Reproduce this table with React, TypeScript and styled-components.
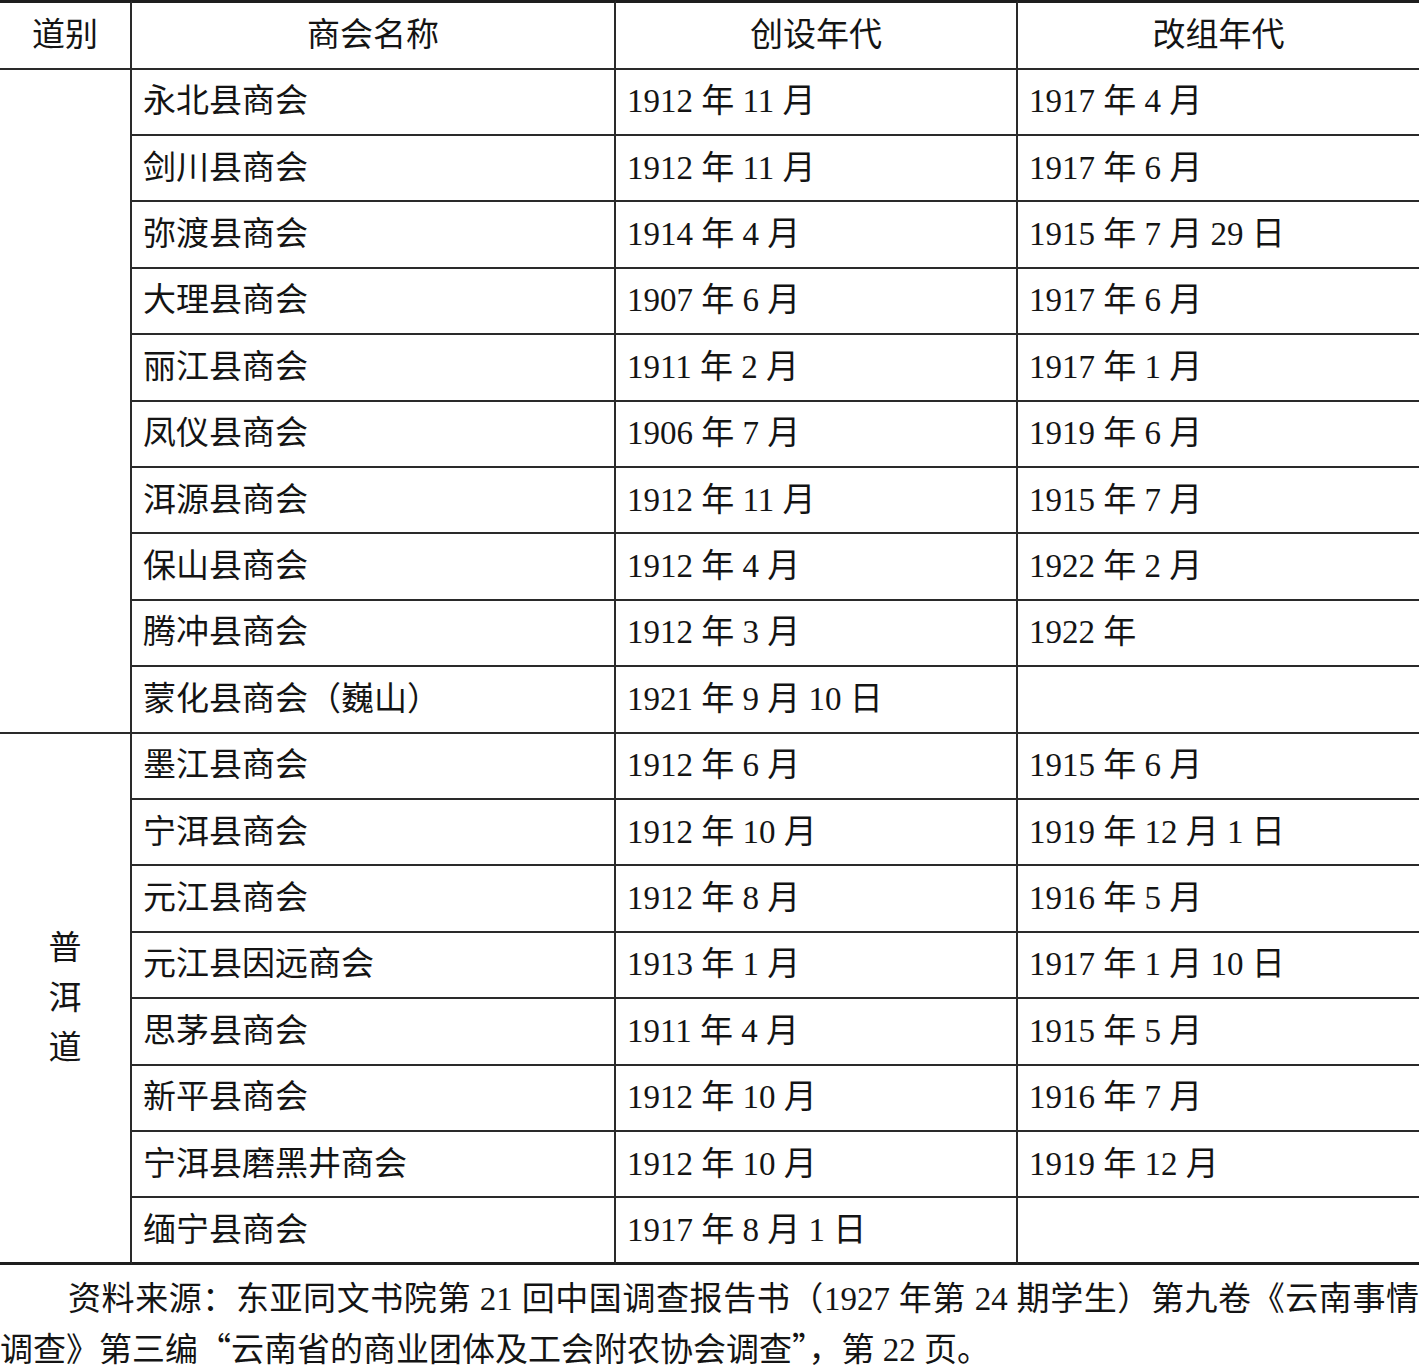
import React from "react";
import styled, { createGlobalStyle } from "styled-components";

const GlobalStyle = createGlobalStyle`
  html, body { margin: 0; padding: 0; background: #ffffff; }
  body {
    font-family: "Liberation Serif", "Noto Sans CJK SC", serif;
    color: #141414;
  }
`;

const Page = styled.div`
  width: 1419px;
`;

const Table = styled.table`
  width: 1419px;
  table-layout: fixed;
  border-collapse: separate;
  border-spacing: 0;
  font-size: 33px;
`;

const HeadCell = styled.th<{ $last?: boolean }>`
  height: 69.5px;
  padding: 0;
  box-sizing: border-box;
  border-top: 3px solid #1e1e1e;
  border-bottom: 2px solid #2a2a2a;
  border-right: ${(p) => (p.$last ? "none" : "2px solid #2a2a2a")};
  font-weight: normal;
  text-align: center;
  vertical-align: middle;
  line-height: 1;
`;

const Cell = styled.td<{ $last?: boolean; $bottom?: boolean }>`
  height: 66.42px;
  padding: 0 0 0 11px;
  box-sizing: border-box;
  border-bottom: ${(p) => (p.$bottom ? "3px solid #1e1e1e" : "2px solid #2a2a2a")};
  border-right: ${(p) => (p.$last ? "none" : "2px solid #2a2a2a")};
  text-align: left;
  vertical-align: middle;
  line-height: 1;
  white-space: nowrap;
`;

const GroupCell = styled.td<{ $bottom?: boolean }>`
  padding: 0;
  box-sizing: border-box;
  border-bottom: ${(p) => (p.$bottom ? "3px solid #1e1e1e" : "2px solid #2a2a2a")};
  border-right: 2px solid #2a2a2a;
  text-align: center;
  vertical-align: middle;
`;

const VerticalLabel = styled.div`
  display: flex;
  flex-direction: column;
  align-items: center;
  line-height: 50px;
`;

const Note = styled.p`
  margin: 0;
  padding-top: 10px;
  font-size: 33px;
  line-height: 48px;
  text-indent: 68px;
  text-align: justify;
`;

const CJK = styled.span`
  font-family: "Noto Sans CJK SC", sans-serif;
`;

type Row = [string, string, string];

const groupA: Row[] = [
  ["永北县商会", "1912 年 11 月", "1917 年 4 月"],
  ["剑川县商会", "1912 年 11 月", "1917 年 6 月"],
  ["弥渡县商会", "1914 年 4 月", "1915 年 7 月 29 日"],
  ["大理县商会", "1907 年 6 月", "1917 年 6 月"],
  ["丽江县商会", "1911 年 2 月", "1917 年 1 月"],
  ["凤仪县商会", "1906 年 7 月", "1919 年 6 月"],
  ["洱源县商会", "1912 年 11 月", "1915 年 7 月"],
  ["保山县商会", "1912 年 4 月", "1922 年 2 月"],
  ["腾冲县商会", "1912 年 3 月", "1922 年"],
  ["蒙化县商会（巍山）", "1921 年 9 月 10 日", ""],
];

const groupB: Row[] = [
  ["墨江县商会", "1912 年 6 月", "1915 年 6 月"],
  ["宁洱县商会", "1912 年 10 月", "1919 年 12 月 1 日"],
  ["元江县商会", "1912 年 8 月", "1916 年 5 月"],
  ["元江县因远商会", "1913 年 1 月", "1917 年 1 月 10 日"],
  ["思茅县商会", "1911 年 4 月", "1915 年 5 月"],
  ["新平县商会", "1912 年 10 月", "1916 年 7 月"],
  ["宁洱县磨黑井商会", "1912 年 10 月", "1919 年 12 月"],
  ["缅宁县商会", "1917 年 8 月 1 日", ""],
];

function renderGroup(rows: Row[], label: string[], isLastGroup: boolean) {
  return rows.map((r, i) => {
    const bottom = isLastGroup && i === rows.length - 1;
    return (
      <tr key={r[0]}>
        {i === 0 && (
          <GroupCell rowSpan={rows.length} $bottom={isLastGroup}>
            <VerticalLabel>
              {label.map((c) => (
                <span key={c}>{c}</span>
              ))}
            </VerticalLabel>
          </GroupCell>
        )}
        <Cell $bottom={bottom}>{r[0]}</Cell>
        <Cell $bottom={bottom}>{r[1]}</Cell>
        <Cell $bottom={bottom} $last>
          {r[2]}
        </Cell>
      </tr>
    );
  });
}

export default function App() {
  return (
    <Page>
      <GlobalStyle />
      <Table>
        <colgroup>
          <col style={{ width: 132 }} />
          <col style={{ width: 484 }} />
          <col style={{ width: 402 }} />
          <col style={{ width: 401 }} />
        </colgroup>
        <thead>
          <tr>
            <HeadCell>道别</HeadCell>
            <HeadCell>商会名称</HeadCell>
            <HeadCell>创设年代</HeadCell>
            <HeadCell $last>改组年代</HeadCell>
          </tr>
        </thead>
        <tbody>
          {renderGroup(groupA, [], false)}
          {renderGroup(groupB, ["普", "洱", "道"], true)}
        </tbody>
      </Table>
      <Note>
        资料来源：东亚同文书院第 21 回中国调查报告书（1927 年第 24 期学生）第九卷《云南事情调查》第三编
        <CJK>“</CJK>云南省的商业团体及工会附农协会调查<CJK>”</CJK>，第 22 页。
      </Note>
    </Page>
  );
}
